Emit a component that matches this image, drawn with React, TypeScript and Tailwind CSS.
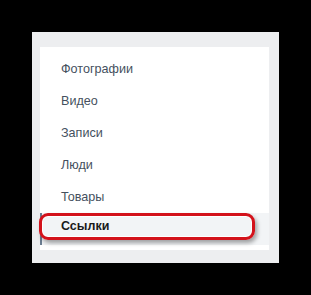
import React from "react";

const items = ["Фотографии", "Видео", "Записи", "Люди", "Товары"];

export default function App() {
  return (
    <div className="w-[311px] h-[295px] bg-black pt-[32px] pl-[32px]" style={{ fontFamily: '"Liberation Sans", Arial, sans-serif' }}>
      <div className="w-[247px] h-[231px] bg-[#edeef0] pt-[15px] pl-[8px]">
        <div className="w-[229px] h-[203px] bg-white pt-[6px] flex flex-col">
          {items.map((t) => (
            <div key={t} className="h-[32px] flex items-center pl-[21px] text-[12.6px] text-[#45505e]">
              {t}
            </div>
          ))}
          <div className="relative h-[32px] flex items-center pl-[19px] text-[12.5px] font-bold text-[#1a1a1a] bg-[#f2f4f6] border-l-[2px] border-[#6b7d91]">
            <span className="relative -mt-[5px]">Ссылки</span>
            <div className="absolute left-[-3px] top-0 w-[216px] h-[27px] rounded-[9px] border-[3px] border-[#d3121b] shadow-[inset_0_0_0_1px_#fff,2px_3px_4px_rgba(0,0,0,0.35)]" />
          </div>
        </div>
      </div>
    </div>
  );
}
